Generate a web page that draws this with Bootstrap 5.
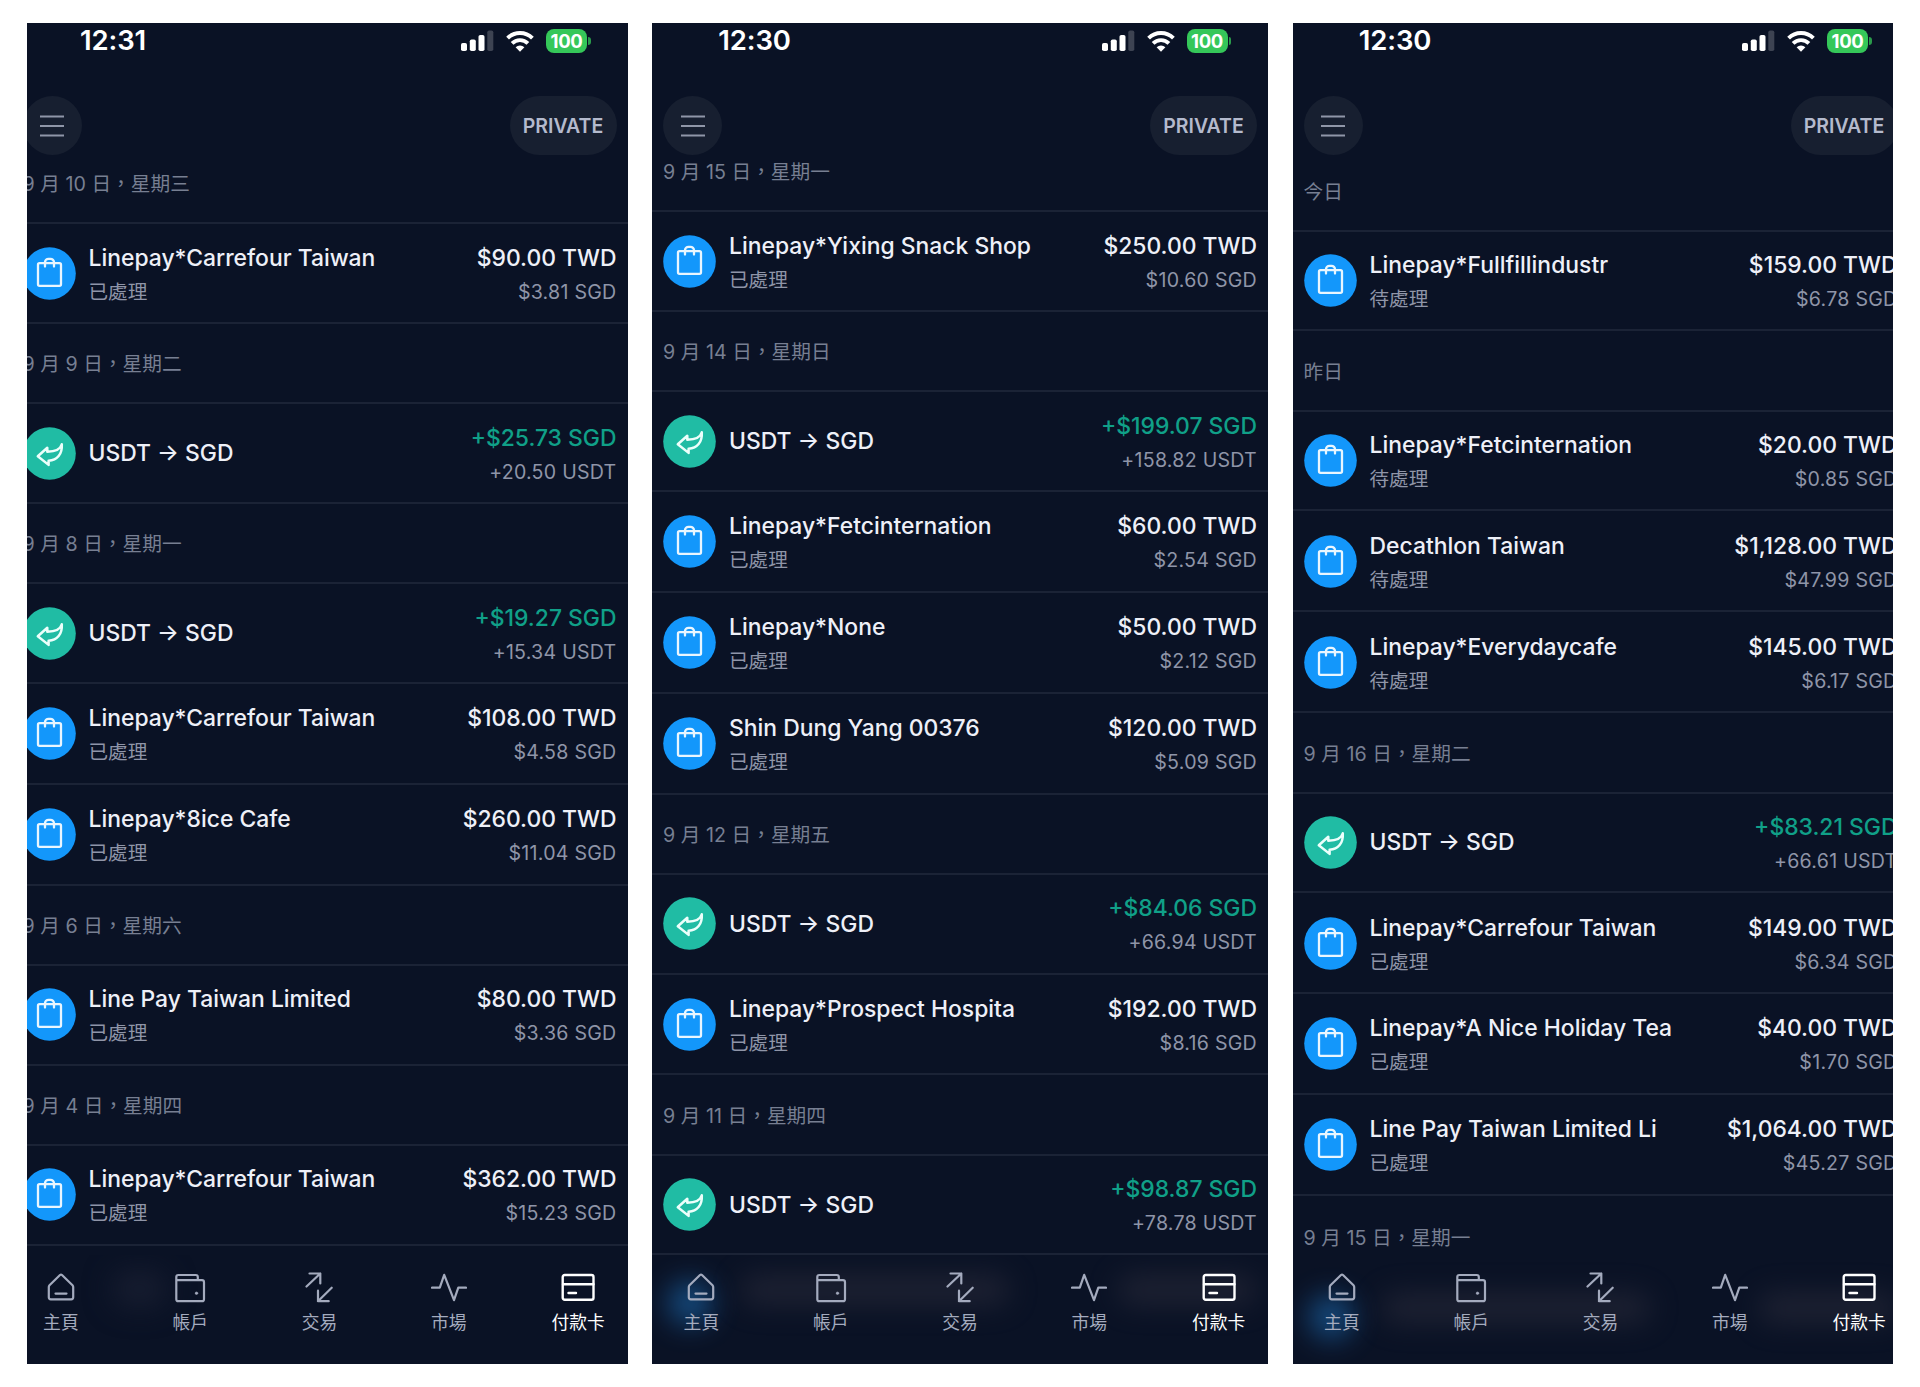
<!DOCTYPE html>
<html lang="zh-Hant">
<head>
<meta charset="utf-8">
<meta name="viewport" content="width=device-width, initial-scale=1">
<title>付款卡</title>
<link href="https://cdn.jsdelivr.net/npm/bootstrap@5.3.0/dist/css/bootstrap.min.css" rel="stylesheet">
<style>
  body { background:#fff; font-family:Inter,"Noto Sans CJK TC",sans-serif; width:1920px; height:1387px; overflow:hidden; }
  .board { padding:23px 27px 0; column-gap:24.5px; }
  .phone { height:1341px; background:#0a1225; flex:none; }
  .phone.cut-left, .phone.cut-right { width:600.5px; }
  .phone.whole { width:616px; }
  .cut-left { justify-content:flex-end; }
  .screen-body { width:616px; height:1341px; flex:none; }
  .statusbar { height:73px; }
  .clock { width:205px; height:37px; line-height:35px; font-size:27.5px; font-weight:600; color:#fff; letter-spacing:-.1px; }
  .cut-left .clock { width:203px; }
  .status-icons { padding:5px 39px 0 0; height:31px; }
  .wifi-gap { margin-left:12px; margin-right:12px; }
  .batt { width:41px; height:24px; border-radius:8px; background:#35c759; color:#fff; font-size:18.5px; font-weight:700; line-height:24px; letter-spacing:-.3px; }
  .nub { width:2.500px; height:8px; border-radius:0 3px 3px 0; background:#2a9a4b; margin-left:1px; margin-right:-2px; }
  .topbar { height:59px; padding:0 11px; }
  .round-btn { width:59px; height:59px; background:#171f30; }
  .pill-btn { width:107px; height:59px; padding-top:2px; border-radius:30px; background:#171f30; color:#b4bacd; font-size:19.5px; font-weight:600; }
  .day { height:80.4px; padding:0 11px 23px; line-height:30px; font-size:19.7px; color:#777f92; border-bottom:2px solid #1b2336; white-space:pre; }
  .day.first-a { height:69.3px; }
  .day.first-b { height:57.3px; }
  .day.first-c { height:76.8px; }
  .tx { height:100.9px; padding:0 11px; border-bottom:2px solid #1b2336; white-space:nowrap; }
  .day + .tx { height:99.6px; }
  .tx + .tx { padding-top:1px; }
  .disc { width:53px; height:53px; margin-right:13px; flex:none; }
  .t1 { font-size:22.9px; line-height:34px; font-weight:500; color:#eef0f8; }
  .t2 { font-size:19.6px; line-height:34px; color:#8f95a8; }
  .two-line { padding-top:3px; }
  .text-end .t2 { letter-spacing:.25px; }
  .t1.gain { color:#10a088; }
  .tabs { height:109px; padding:17px 5.4px 0; background:#0a1225; overflow:hidden; }
  .tab-item { width:88px; font-size:17.8px; line-height:27px; color:#a4abbe; }
  .tab-item.on { color:#fff; }
  .tab-item svg { margin-bottom:5px; }
  .glow { filter:blur(14px); border-radius:30px; }
  .glow-blue { left:16px; width:44px; height:44px; background:#17528a; opacity:.9; }
  .glow-name { left:88px; width:270px; height:30px; background:#252737; opacity:.75; }
  .glow-sum { left:465px; width:140px; height:30px; background:#252737; opacity:.75; }
  .up-blue { top:26px; } .up-text { top:20px; }
  .low-blue { top:40px; } .low-text { top:38px; }
  .glow-faint { left:100px; top:16px; width:55px; height:36px; background:#171d30; }
</style>
<script src="https://cdn.jsdelivr.net/npm/bootstrap@5.3.0/dist/js/bootstrap.bundle.min.js"></script>
</head>
<body>
<svg width="0" height="0" class="position-absolute">
  <defs>
    <symbol id="bag" viewBox="0 0 53 53"><circle cx="26.5" cy="26.5" r="26.3" fill="#1397fb"/><g fill="none" stroke="#e9f6ff" stroke-width="2.300" stroke-linejoin="round" stroke-linecap="round"><rect x="15" y="16.200" width="23" height="22.600" rx="1.5"/><path d="M22 19.500v-4.200a3.500 3.500 0 0 1 3.500-3.500h2a3.500 3.500 0 0 1 3.500 3.500v4.200"/></g></symbol>
    <symbol id="swap" viewBox="0 0 53 53"><circle cx="26.500" cy="26.500" r="26.300" fill="#20bca4"/><path d="M14.800 29.200 24.300 20.800V24.700C32 24.700 37.300 23 38.800 17.300C39.400 27.200 34.200 33.200 25.600 33.700V37.900Z" fill="none" stroke="#ecfffb" stroke-width="2.500" stroke-linejoin="round"/></symbol>
    <symbol id="sig" viewBox="0 0 33 22"><g fill="#fff"><rect x="0" y="13" width="6" height="8" rx="1.800"/><rect x="8.800" y="9.500" width="6" height="11.500" rx="1.800"/><rect x="17.500" y="5" width="6" height="16" rx="1.800"/></g><rect x="26.300" y="0.500" width="6" height="20.500" rx="1.800" fill="#3d4352"/></symbol>
    <symbol id="wifi" viewBox="0 0 28 21"><g fill="none" stroke="#fff" stroke-width="3.900"><path d="M1.600 7.200A17.500 17.500 0 0 1 26.400 7.200"/><path d="M6.100 12.400A11.200 11.200 0 0 1 21.900 12.400"/></g><path d="M14 20.700 9.600 16.300A6.300 6.300 0 0 1 18.400 16.300Z" fill="#fff"/></symbol>
    <symbol id="menu" viewBox="0 0 24 22"><path d="M.5 1.500h23M.5 11h23M.5 20.500h23" stroke="#8f96a8" stroke-width="2" stroke-linecap="round"/></symbol>
    <symbol id="home" viewBox="0 0 36 32"><path d="M17 3 6.500 13.200Q5.800 14 5.800 15V25.300Q5.800 27.300 7.800 27.300H28.200Q30.200 27.300 30.200 25.300V15Q30.200 14 29.500 13.200L19 3Q18 2.200 17 3ZM12.500 21.600h11"/></symbol>
    <symbol id="wallet" viewBox="0 0 36 32"><path d="M4.300 8.200V27.200Q4.300 29.200 6.300 29.200H30Q32 29.200 32 27.200V10.200Q32 8.200 30 8.200H4.300V5Q4.300 3 6.300 3H23.800Q25.800 3 25.800 5V8.200"/><circle cx="24.500" cy="21.200" r="1.300" fill="currentColor" stroke-width=".5"/></symbol>
    <symbol id="trade" viewBox="0 0 36 32"><path d="M5.500 14.500 19.300 1.500M8.500 1.500H19.300V11.500M30.700 15.700 17 29.200M17 18.700V29.200H27.700"/></symbol>
    <symbol id="pulse" viewBox="0 0 36 32"><path d="M1 15.700H8.800L13.200 2.800 23 28.200 27.300 15.700H35"/></symbol>
    <symbol id="card" viewBox="0 0 36 32"><rect x="2.700" y="3" width="30.800" height="24.800" rx="2"/><path d="M3 12.200H33.500M8.500 21H16"/></symbol>
  </defs>
</svg>

<main class="board d-flex align-items-start">

<section class="phone cut-left d-flex overflow-hidden">
 <div class="screen-body position-relative">
  <div class="statusbar d-flex justify-content-between"><div class="clock text-center">12:31</div>
   <div class="status-icons d-flex align-items-center"><svg width="33" height="22"><use href="#sig"/></svg><svg class="wifi-gap" width="28" height="21"><use href="#wifi"/></svg><div class="batt text-center">100</div><div class="nub"></div></div></div>
  <div class="topbar d-flex justify-content-between"><div class="round-btn rounded-circle d-flex align-items-center justify-content-center"><svg width="24" height="22"><use href="#menu"/></svg></div><div class="pill-btn d-flex align-items-center justify-content-center">PRIVATE</div></div>
  <div class="day first-a d-flex align-items-end">9 月 10 日，星期三</div>
  <div class="tx d-flex align-items-center"><svg class="disc"><use href="#bag"/></svg><div class="flex-grow-1 two-line"><div class="t1">Linepay*Carrefour Taiwan</div><div class="t2">已處理</div></div><div class="text-end two-line"><div class="t1">$90.00 TWD</div><div class="t2">$3.81 SGD</div></div></div>
  <div class="day d-flex align-items-end">9 月 9 日，星期二</div>
  <div class="tx d-flex align-items-center"><svg class="disc"><use href="#swap"/></svg><div class="flex-grow-1 t1">USDT → SGD</div><div class="text-end two-line"><div class="t1 gain">+$25.73 SGD</div><div class="t2">+20.50 USDT</div></div></div>
  <div class="day d-flex align-items-end">9 月 8 日，星期一</div>
  <div class="tx d-flex align-items-center"><svg class="disc"><use href="#swap"/></svg><div class="flex-grow-1 t1">USDT → SGD</div><div class="text-end two-line"><div class="t1 gain">+$19.27 SGD</div><div class="t2">+15.34 USDT</div></div></div>
  <div class="tx d-flex align-items-center"><svg class="disc"><use href="#bag"/></svg><div class="flex-grow-1 two-line"><div class="t1">Linepay*Carrefour Taiwan</div><div class="t2">已處理</div></div><div class="text-end two-line"><div class="t1">$108.00 TWD</div><div class="t2">$4.58 SGD</div></div></div>
  <div class="tx d-flex align-items-center"><svg class="disc"><use href="#bag"/></svg><div class="flex-grow-1 two-line"><div class="t1">Linepay*8ice Cafe</div><div class="t2">已處理</div></div><div class="text-end two-line"><div class="t1">$260.00 TWD</div><div class="t2">$11.04 SGD</div></div></div>
  <div class="day d-flex align-items-end">9 月 6 日，星期六</div>
  <div class="tx d-flex align-items-center"><svg class="disc"><use href="#bag"/></svg><div class="flex-grow-1 two-line"><div class="t1">Line Pay Taiwan Limited</div><div class="t2">已處理</div></div><div class="text-end two-line"><div class="t1">$80.00 TWD</div><div class="t2">$3.36 SGD</div></div></div>
  <div class="day d-flex align-items-end">9 月 4 日，星期四</div>
  <div class="tx d-flex align-items-center"><svg class="disc"><use href="#bag"/></svg><div class="flex-grow-1 two-line"><div class="t1">Linepay*Carrefour Taiwan</div><div class="t2">已處理</div></div><div class="text-end two-line"><div class="t1">$362.00 TWD</div><div class="t2">$15.23 SGD</div></div></div>
  <nav class="tabs position-absolute bottom-0 start-0 w-100">
   <div class="glow glow-faint position-absolute"></div>
   <div class="position-relative d-flex justify-content-between text-center">
    <div class="tab-item"><svg width="36" height="32" fill="none" stroke="currentColor" stroke-width="2.200" stroke-linejoin="round" stroke-linecap="round"><use href="#home"/></svg><div>主頁</div></div>
    <div class="tab-item"><svg width="36" height="32" fill="none" stroke="currentColor" stroke-width="2.200" stroke-linejoin="round" stroke-linecap="round"><use href="#wallet"/></svg><div>帳戶</div></div>
    <div class="tab-item"><svg width="36" height="32" fill="none" stroke="currentColor" stroke-width="2.200" stroke-linejoin="round" stroke-linecap="round"><use href="#trade"/></svg><div>交易</div></div>
    <div class="tab-item"><svg width="36" height="32" fill="none" stroke="currentColor" stroke-width="2.200" stroke-linejoin="round" stroke-linecap="round"><use href="#pulse"/></svg><div>市場</div></div>
    <div class="tab-item on"><svg width="36" height="32" fill="none" stroke="currentColor" stroke-width="2.400" stroke-linejoin="round" stroke-linecap="round"><use href="#card"/></svg><div>付款卡</div></div>
   </div>
  </nav>
 </div>
</section>

<section class="phone whole d-flex overflow-hidden">
 <div class="screen-body position-relative">
  <div class="statusbar d-flex justify-content-between"><div class="clock text-center">12:30</div>
   <div class="status-icons d-flex align-items-center"><svg width="33" height="22"><use href="#sig"/></svg><svg class="wifi-gap" width="28" height="21"><use href="#wifi"/></svg><div class="batt text-center">100</div><div class="nub"></div></div></div>
  <div class="topbar d-flex justify-content-between"><div class="round-btn rounded-circle d-flex align-items-center justify-content-center"><svg width="24" height="22"><use href="#menu"/></svg></div><div class="pill-btn d-flex align-items-center justify-content-center">PRIVATE</div></div>
  <div class="day first-b d-flex align-items-end">9 月 15 日，星期一</div>
  <div class="tx d-flex align-items-center"><svg class="disc"><use href="#bag"/></svg><div class="flex-grow-1 two-line"><div class="t1">Linepay*Yixing Snack Shop</div><div class="t2">已處理</div></div><div class="text-end two-line"><div class="t1">$250.00 TWD</div><div class="t2">$10.60 SGD</div></div></div>
  <div class="day d-flex align-items-end">9 月 14 日，星期日</div>
  <div class="tx d-flex align-items-center"><svg class="disc"><use href="#swap"/></svg><div class="flex-grow-1 t1">USDT → SGD</div><div class="text-end two-line"><div class="t1 gain">+$199.07 SGD</div><div class="t2">+158.82 USDT</div></div></div>
  <div class="tx d-flex align-items-center"><svg class="disc"><use href="#bag"/></svg><div class="flex-grow-1 two-line"><div class="t1">Linepay*Fetcinternation</div><div class="t2">已處理</div></div><div class="text-end two-line"><div class="t1">$60.00 TWD</div><div class="t2">$2.54 SGD</div></div></div>
  <div class="tx d-flex align-items-center"><svg class="disc"><use href="#bag"/></svg><div class="flex-grow-1 two-line"><div class="t1">Linepay*None</div><div class="t2">已處理</div></div><div class="text-end two-line"><div class="t1">$50.00 TWD</div><div class="t2">$2.12 SGD</div></div></div>
  <div class="tx d-flex align-items-center"><svg class="disc"><use href="#bag"/></svg><div class="flex-grow-1 two-line"><div class="t1">Shin Dung Yang 00376</div><div class="t2">已處理</div></div><div class="text-end two-line"><div class="t1">$120.00 TWD</div><div class="t2">$5.09 SGD</div></div></div>
  <div class="day d-flex align-items-end">9 月 12 日，星期五</div>
  <div class="tx d-flex align-items-center"><svg class="disc"><use href="#swap"/></svg><div class="flex-grow-1 t1">USDT → SGD</div><div class="text-end two-line"><div class="t1 gain">+$84.06 SGD</div><div class="t2">+66.94 USDT</div></div></div>
  <div class="tx d-flex align-items-center"><svg class="disc"><use href="#bag"/></svg><div class="flex-grow-1 two-line"><div class="t1">Linepay*Prospect Hospita</div><div class="t2">已處理</div></div><div class="text-end two-line"><div class="t1">$192.00 TWD</div><div class="t2">$8.16 SGD</div></div></div>
  <div class="day d-flex align-items-end">9 月 11 日，星期四</div>
  <div class="tx d-flex align-items-center"><svg class="disc"><use href="#swap"/></svg><div class="flex-grow-1 t1">USDT → SGD</div><div class="text-end two-line"><div class="t1 gain">+$98.87 SGD</div><div class="t2">+78.78 USDT</div></div></div>
  <nav class="tabs position-absolute bottom-0 start-0 w-100">
   <div class="glow glow-blue up-blue position-absolute"></div><div class="glow glow-name up-text position-absolute"></div><div class="glow glow-sum up-text position-absolute"></div>
   <div class="position-relative d-flex justify-content-between text-center">
    <div class="tab-item"><svg width="36" height="32" fill="none" stroke="currentColor" stroke-width="2.200" stroke-linejoin="round" stroke-linecap="round"><use href="#home"/></svg><div>主頁</div></div>
    <div class="tab-item"><svg width="36" height="32" fill="none" stroke="currentColor" stroke-width="2.200" stroke-linejoin="round" stroke-linecap="round"><use href="#wallet"/></svg><div>帳戶</div></div>
    <div class="tab-item"><svg width="36" height="32" fill="none" stroke="currentColor" stroke-width="2.200" stroke-linejoin="round" stroke-linecap="round"><use href="#trade"/></svg><div>交易</div></div>
    <div class="tab-item"><svg width="36" height="32" fill="none" stroke="currentColor" stroke-width="2.200" stroke-linejoin="round" stroke-linecap="round"><use href="#pulse"/></svg><div>市場</div></div>
    <div class="tab-item on"><svg width="36" height="32" fill="none" stroke="currentColor" stroke-width="2.400" stroke-linejoin="round" stroke-linecap="round"><use href="#card"/></svg><div>付款卡</div></div>
   </div>
  </nav>
 </div>
</section>

<section class="phone cut-right d-flex overflow-hidden">
 <div class="screen-body position-relative">
  <div class="statusbar d-flex justify-content-between"><div class="clock text-center">12:30</div>
   <div class="status-icons d-flex align-items-center"><svg width="33" height="22"><use href="#sig"/></svg><svg class="wifi-gap" width="28" height="21"><use href="#wifi"/></svg><div class="batt text-center">100</div><div class="nub"></div></div></div>
  <div class="topbar d-flex justify-content-between"><div class="round-btn rounded-circle d-flex align-items-center justify-content-center"><svg width="24" height="22"><use href="#menu"/></svg></div><div class="pill-btn d-flex align-items-center justify-content-center">PRIVATE</div></div>
  <div class="day first-c d-flex align-items-end">今日</div>
  <div class="tx d-flex align-items-center"><svg class="disc"><use href="#bag"/></svg><div class="flex-grow-1 two-line"><div class="t1">Linepay*Fullfillindustr</div><div class="t2">待處理</div></div><div class="text-end two-line"><div class="t1">$159.00 TWD</div><div class="t2">$6.78 SGD</div></div></div>
  <div class="day d-flex align-items-end">昨日</div>
  <div class="tx d-flex align-items-center"><svg class="disc"><use href="#bag"/></svg><div class="flex-grow-1 two-line"><div class="t1">Linepay*Fetcinternation</div><div class="t2">待處理</div></div><div class="text-end two-line"><div class="t1">$20.00 TWD</div><div class="t2">$0.85 SGD</div></div></div>
  <div class="tx d-flex align-items-center"><svg class="disc"><use href="#bag"/></svg><div class="flex-grow-1 two-line"><div class="t1">Decathlon Taiwan</div><div class="t2">待處理</div></div><div class="text-end two-line"><div class="t1">$1,128.00 TWD</div><div class="t2">$47.99 SGD</div></div></div>
  <div class="tx d-flex align-items-center"><svg class="disc"><use href="#bag"/></svg><div class="flex-grow-1 two-line"><div class="t1">Linepay*Everydaycafe</div><div class="t2">待處理</div></div><div class="text-end two-line"><div class="t1">$145.00 TWD</div><div class="t2">$6.17 SGD</div></div></div>
  <div class="day d-flex align-items-end">9 月 16 日，星期二</div>
  <div class="tx d-flex align-items-center"><svg class="disc"><use href="#swap"/></svg><div class="flex-grow-1 t1">USDT → SGD</div><div class="text-end two-line"><div class="t1 gain">+$83.21 SGD</div><div class="t2">+66.61 USDT</div></div></div>
  <div class="tx d-flex align-items-center"><svg class="disc"><use href="#bag"/></svg><div class="flex-grow-1 two-line"><div class="t1">Linepay*Carrefour Taiwan</div><div class="t2">已處理</div></div><div class="text-end two-line"><div class="t1">$149.00 TWD</div><div class="t2">$6.34 SGD</div></div></div>
  <div class="tx d-flex align-items-center"><svg class="disc"><use href="#bag"/></svg><div class="flex-grow-1 two-line"><div class="t1">Linepay*A Nice Holiday Tea</div><div class="t2">已處理</div></div><div class="text-end two-line"><div class="t1">$40.00 TWD</div><div class="t2">$1.70 SGD</div></div></div>
  <div class="tx d-flex align-items-center"><svg class="disc"><use href="#bag"/></svg><div class="flex-grow-1 two-line"><div class="t1">Line Pay Taiwan Limited Li</div><div class="t2">已處理</div></div><div class="text-end two-line"><div class="t1">$1,064.00 TWD</div><div class="t2">$45.27 SGD</div></div></div>
  <div class="day d-flex align-items-end border-bottom-0">9 月 15 日，星期一</div>
  <nav class="tabs position-absolute bottom-0 start-0 w-100">
   <div class="glow glow-blue low-blue position-absolute"></div><div class="glow glow-name low-text position-absolute"></div><div class="glow glow-sum low-text position-absolute"></div>
   <div class="position-relative d-flex justify-content-between text-center">
    <div class="tab-item"><svg width="36" height="32" fill="none" stroke="currentColor" stroke-width="2.200" stroke-linejoin="round" stroke-linecap="round"><use href="#home"/></svg><div>主頁</div></div>
    <div class="tab-item"><svg width="36" height="32" fill="none" stroke="currentColor" stroke-width="2.200" stroke-linejoin="round" stroke-linecap="round"><use href="#wallet"/></svg><div>帳戶</div></div>
    <div class="tab-item"><svg width="36" height="32" fill="none" stroke="currentColor" stroke-width="2.200" stroke-linejoin="round" stroke-linecap="round"><use href="#trade"/></svg><div>交易</div></div>
    <div class="tab-item"><svg width="36" height="32" fill="none" stroke="currentColor" stroke-width="2.200" stroke-linejoin="round" stroke-linecap="round"><use href="#pulse"/></svg><div>市場</div></div>
    <div class="tab-item on"><svg width="36" height="32" fill="none" stroke="currentColor" stroke-width="2.400" stroke-linejoin="round" stroke-linecap="round"><use href="#card"/></svg><div>付款卡</div></div>
   </div>
  </nav>
 </div>
</section>

</main>
</body>
</html>
